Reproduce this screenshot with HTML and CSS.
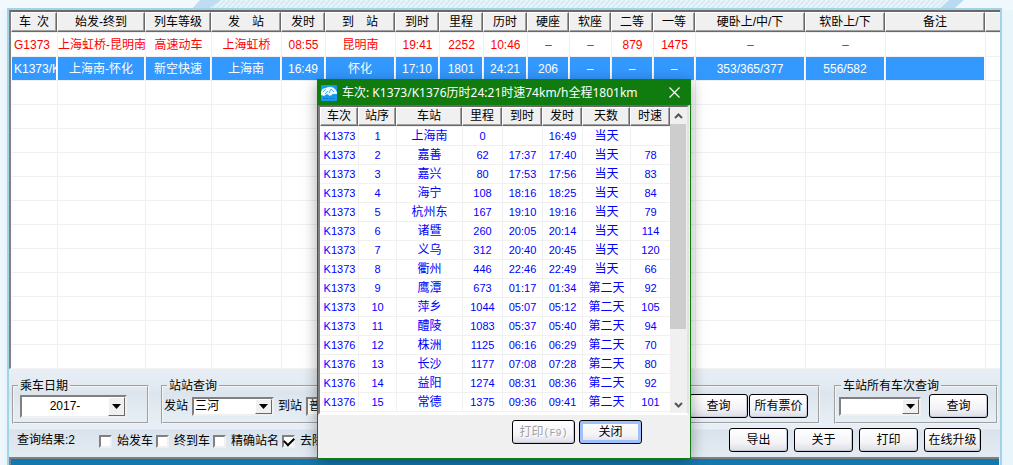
FILE: index.html
```html
<!DOCTYPE html>
<html lang="zh-CN">
<head>
<meta charset="utf-8">
<title>列车时刻查询</title>
<link rel="stylesheet" href="styles.css">
</head>
<body>
<svg class="backdrop" aria-hidden="true" width="100%" height="10">
  <defs><pattern id="hatch" width="5" height="5" patternUnits="userSpaceOnUse"><path d="M-1 6L6 -1" stroke="#d3e6ec" stroke-width="1.3"/></pattern></defs>
  <rect width="100%" height="10" fill="url(#hatch)"/>
  <path d="M0 0H206L191 10H0Z" fill="#f1f9fd"/>
  <path d="M200 0H221L207 10H191Z" fill="#bfdcf2"/>
  <path d="M949 0H964L953 10H938Z" fill="#b9daf1"/>
  <path d="M964 0H1600V10H953Z" fill="#eef8fd"/>
</svg>
<main class="panel">
  <div class="list">
    <table class="grid trains">
      <colgroup><col class="w46"><col class="w88"><col class="w66"><col class="w70"><col class="w44"><col class="w70"><col class="w44"><col class="w44"><col class="w44"><col class="w42"><col class="w42"><col class="w42"><col class="w42"><col class="w110"><col class="w80"><col class="w100"><col></colgroup>
      <thead><tr><th>车&ensp;次</th><th>始发-终到</th><th>列车等级</th><th>发&emsp;站</th><th>发时</th><th>到&emsp;站</th><th>到时</th><th>里程</th><th>历时</th><th>硬座</th><th>软座</th><th>二等</th><th>一等</th><th>硬卧上/中/下</th><th>软卧上/下</th><th>备注</th><th></th></tr></thead>
      <tbody>
        <tr class="fast"><td class="code">G1373</td><td>上海虹桥-昆明南</td><td>高速动车</td><td>上海虹桥</td><td>08:55</td><td>昆明南</td><td>19:41</td><td>2252</td><td>10:46</td><td>–</td><td>–</td><td>879</td><td>1475</td><td>–</td><td>–</td><td></td><td></td></tr>
        <tr class="selected"><td class="code">K1373/K1376</td><td>上海南-怀化</td><td>新空快速</td><td>上海南</td><td>16:49</td><td>怀化</td><td>17:10</td><td>1801</td><td>24:21</td><td>206</td><td>–</td><td>–</td><td>–</td><td>353/365/377</td><td>556/582</td><td></td><td></td></tr>
        <tr><td></td><td></td><td></td><td></td><td></td><td></td><td></td><td></td><td></td><td></td><td></td><td></td><td></td><td></td><td></td><td></td><td></td></tr>
        <tr><td></td><td></td><td></td><td></td><td></td><td></td><td></td><td></td><td></td><td></td><td></td><td></td><td></td><td></td><td></td><td></td><td></td></tr>
        <tr><td></td><td></td><td></td><td></td><td></td><td></td><td></td><td></td><td></td><td></td><td></td><td></td><td></td><td></td><td></td><td></td><td></td></tr>
        <tr><td></td><td></td><td></td><td></td><td></td><td></td><td></td><td></td><td></td><td></td><td></td><td></td><td></td><td></td><td></td><td></td><td></td></tr>
        <tr><td></td><td></td><td></td><td></td><td></td><td></td><td></td><td></td><td></td><td></td><td></td><td></td><td></td><td></td><td></td><td></td><td></td></tr>
        <tr><td></td><td></td><td></td><td></td><td></td><td></td><td></td><td></td><td></td><td></td><td></td><td></td><td></td><td></td><td></td><td></td><td></td></tr>
        <tr><td></td><td></td><td></td><td></td><td></td><td></td><td></td><td></td><td></td><td></td><td></td><td></td><td></td><td></td><td></td><td></td><td></td></tr>
        <tr><td></td><td></td><td></td><td></td><td></td><td></td><td></td><td></td><td></td><td></td><td></td><td></td><td></td><td></td><td></td><td></td><td></td></tr>
        <tr><td></td><td></td><td></td><td></td><td></td><td></td><td></td><td></td><td></td><td></td><td></td><td></td><td></td><td></td><td></td><td></td><td></td></tr>
        <tr><td></td><td></td><td></td><td></td><td></td><td></td><td></td><td></td><td></td><td></td><td></td><td></td><td></td><td></td><td></td><td></td><td></td></tr>
        <tr><td></td><td></td><td></td><td></td><td></td><td></td><td></td><td></td><td></td><td></td><td></td><td></td><td></td><td></td><td></td><td></td><td></td></tr>
        <tr><td></td><td></td><td></td><td></td><td></td><td></td><td></td><td></td><td></td><td></td><td></td><td></td><td></td><td></td><td></td><td></td><td></td></tr>
      </tbody>
    </table>
  </div>

  <form class="controls">
    <div class="groups">
      <fieldset class="group date">
        <legend>乘车日期</legend>
        <div class="combo wide"><select aria-label="乘车日期"><option>2017-</option></select><span class="drop"><svg width="9" height="5" viewBox="0 0 9 5"><path d="M0 0H9L4.500 5Z"/></svg></span></div>
      </fieldset>
      <fieldset class="group route">
        <legend>站站查询</legend>
        <label for="from">发站</label>
        <div class="combo"><select id="from"><option>三河</option></select><span class="drop"><svg width="9" height="5" viewBox="0 0 9 5"><path d="M0 0H9L4.500 5Z"/></svg></span></div>
        <label for="to">到站</label>
        <div class="combo"><select id="to"><option>普</option></select><span class="drop"><svg width="9" height="5" viewBox="0 0 9 5"><path d="M0 0H9L4.500 5Z"/></svg></span></div>
        <div class="pair"><button type="button">查询</button><button type="button">所有票价</button></div>
      </fieldset>
      <fieldset class="group station">
        <legend>车站所有车次查询</legend>
        <div class="combo"><select aria-label="车站"><option></option></select><span class="drop"><svg width="9" height="5" viewBox="0 0 9 5"><path d="M0 0H9L4.500 5Z"/></svg></span></div>
        <button type="button">查询</button>
      </fieldset>
    </div>
    <div class="options">
      <output>查询结果:2</output>
      <div class="checks">
        <label><input type="checkbox">始发车</label>
        <label><input type="checkbox">终到车</label>
        <label><input type="checkbox">精确站名</label>
        <label><input type="checkbox" checked>去除</label>
      </div>
      <div class="actions"><button type="button">导出</button><button type="button">关于</button><button type="button">打印</button><button type="button" class="tight">在线升级</button></div>
    </div>
  </form>
  <div class="lower"></div>
</main>

<section class="dialog" role="dialog" aria-labelledby="dlg-title">
  <header class="titlebar">
    <svg width="16" height="16" viewBox="0 0 16 16" aria-hidden="true"><rect width="16" height="16" rx="1" fill="#1599ee"/><path d="M0 7Q1 3 5 3Q10 0 14 4L16 7V9L12 9L9 11L6 9L3 11L0 10Z" fill="#eaf7ff"/><path d="M2 7L5 4M8 8L10 4L13 7M4 9L7 6" stroke="#4aaeea" fill="none"/><path d="M2 13.500H14" stroke="#087bc9" stroke-dasharray="2 1"/></svg>
    <h1 id="dlg-title">车次: K1373/K1376历时24:21时速74km/h全程1801km</h1>
    <button type="button" class="close" aria-label="关闭窗口"><svg width="11" height="11" viewBox="0 0 11 11"><path d="M.5 .5L10.500 10.500M10.500 .5L.5 10.500" stroke="#fff" stroke-width="1.200"/></svg></button>
  </header>
  <div class="stops-list">
    <table class="grid stops">
      <colgroup><col class="w38"><col class="w38"><col class="w66"><col class="w40"><col class="w40"><col class="w40"><col class="w48"><col class="w40"></colgroup>
      <thead><tr><th>车次</th><th>站序</th><th>车站</th><th>里程</th><th>到时</th><th>发时</th><th>天数</th><th>时速</th></tr></thead>
      <tbody>
        <tr><td>K1373</td><td>1</td><td class="cn">上海南</td><td>0</td><td></td><td>16:49</td><td class="cn">当天</td><td></td></tr>
        <tr><td>K1373</td><td>2</td><td class="cn">嘉善</td><td>62</td><td>17:37</td><td>17:40</td><td class="cn">当天</td><td>78</td></tr>
        <tr><td>K1373</td><td>3</td><td class="cn">嘉兴</td><td>80</td><td>17:53</td><td>17:56</td><td class="cn">当天</td><td>83</td></tr>
        <tr><td>K1373</td><td>4</td><td class="cn">海宁</td><td>108</td><td>18:16</td><td>18:25</td><td class="cn">当天</td><td>84</td></tr>
        <tr><td>K1373</td><td>5</td><td class="cn">杭州东</td><td>167</td><td>19:10</td><td>19:16</td><td class="cn">当天</td><td>79</td></tr>
        <tr><td>K1373</td><td>6</td><td class="cn">诸暨</td><td>260</td><td>20:05</td><td>20:14</td><td class="cn">当天</td><td>114</td></tr>
        <tr><td>K1373</td><td>7</td><td class="cn">义乌</td><td>312</td><td>20:40</td><td>20:45</td><td class="cn">当天</td><td>120</td></tr>
        <tr><td>K1373</td><td>8</td><td class="cn">衢州</td><td>446</td><td>22:46</td><td>22:49</td><td class="cn">当天</td><td>66</td></tr>
        <tr><td>K1373</td><td>9</td><td class="cn">鹰潭</td><td>673</td><td>01:17</td><td>01:34</td><td class="cn">第二天</td><td>92</td></tr>
        <tr><td>K1373</td><td>10</td><td class="cn">萍乡</td><td>1044</td><td>05:07</td><td>05:12</td><td class="cn">第二天</td><td>105</td></tr>
        <tr><td>K1373</td><td>11</td><td class="cn">醴陵</td><td>1083</td><td>05:37</td><td>05:40</td><td class="cn">第二天</td><td>94</td></tr>
        <tr><td>K1376</td><td>12</td><td class="cn">株洲</td><td>1125</td><td>06:16</td><td>06:29</td><td class="cn">第二天</td><td>70</td></tr>
        <tr><td>K1376</td><td>13</td><td class="cn">长沙</td><td>1177</td><td>07:08</td><td>07:28</td><td class="cn">第二天</td><td>80</td></tr>
        <tr><td>K1376</td><td>14</td><td class="cn">益阳</td><td>1274</td><td>08:31</td><td>08:36</td><td class="cn">第二天</td><td>92</td></tr>
        <tr><td>K1376</td><td>15</td><td class="cn">常德</td><td>1375</td><td>09:36</td><td>09:41</td><td class="cn">第二天</td><td>101</td></tr>
      </tbody>
    </table>
    <div class="scroll" aria-hidden="true">
      <span><svg width="9" height="6" viewBox="0 0 9 6"><path d="M1 5L4.500 1.500L8 5"/></svg></span>
      <i></i>
      <span class="down"><svg width="9" height="6" viewBox="0 0 9 6"><path d="M1 1L4.500 4.500L8 1"/></svg></span>
    </div>
  </div>
  <footer class="dialog-foot"><button type="button" disabled>打印<span class="mono">(F9)</span></button><button type="button" class="default">关闭</button></footer>
</section>
</body>
</html>
```
FILE: styles.css
```css
* { box-sizing: border-box; }

body {
  margin: 0;
  min-height: 100vh;
  display: flex;
  flex-direction: column;
  overflow: hidden;
  background: linear-gradient(90deg, #f0f9fd, #e4f3fa 9px, #e8f6fc);
  color: #000;
  font: 12px/16px "Liberation Sans", "Noto Sans CJK SC", sans-serif;
}

.backdrop { position: absolute; top: 0; left: 0; z-index: -1; }

.panel {
  flex: 1;
  display: flex;
  flex-direction: column;
  margin: 8px 11px 0 7px;
  border: solid #a3d3e8;
  border-width: 2px 2px 0;
  background: #e4ebf3;
}

/* Tables */
.list {
  border: solid #696969;
  border-width: 2px 0 0 2px;
  border-left-color: #808080;
  border-bottom: 1px solid #f4f4f4;
  background: #fff;
  overflow: hidden;
}

.grid { width: 100%; table-layout: fixed; border-collapse: separate; border-spacing: 0; }

.grid th {
  height: 20px;
  padding: 0;
  background: #f0f0f0;
  border: 1px solid #fff;
  border-right-color: #696969;
  border-bottom-color: #696969;
  box-shadow: inset -1px -1px #a0a0a0;
  font-weight: normal;
  line-height: 18px;
  white-space: nowrap;
  overflow: hidden;
}

.trains th:last-child { border-right: 0; box-shadow: inset 0 -1px #a0a0a0; }

.grid td {
  height: 24px;
  padding: 0;
  border-top: 1px solid #f0f0f0;
  border-left: 1px solid #f0f0f0;
  text-align: center;
  line-height: 20px;
  white-space: nowrap;
  overflow: hidden;
  background-clip: padding-box;
}

.grid td:first-child { border-left-color: #fff; }
.trains .code { text-align: left; padding-left: 2px; }
.fast { color: #f00; }
.selected { color: #fff; }
.selected td { background-color: #3399ff; border-right: 1px solid #fff; }
.selected td:last-child { background-color: #fff; }

.w38 { width: 38px; }
.w40 { width: 40px; }
.w42 { width: 42px; }
.w44 { width: 44px; }
.w46 { width: 46px; }
.w48 { width: 48px; }
.w66 { width: 66px; }
.w70 { width: 70px; }
.w80 { width: 80px; }
.w88 { width: 88px; }
.w100 { width: 100px; }
.w110 { width: 110px; }

/* Controls */
button {
  width: 59px;
  height: 24px;
  padding: 0;
  border: 1px solid #000;
  border-radius: 3px;
  background: linear-gradient(#fff, #f4f4f8 60%, #dcdce6);
  box-shadow: inset -1px -1px #c8c8d4;
  color: #000;
  font: inherit;
  white-space: nowrap;
}

.controls {
  padding: 9px 2px 5px 3px;
  background: linear-gradient(#e8eef5, #e2eaf1 18px, #dce5ed 24px, #e5edf4 48px, #e7eef8 60px, #dae3ec 61px, #e3ebf2);
}

.groups { display: flex; }

.group {
  display: flex;
  align-items: center;
  height: 46px;
  min-width: 0;
  margin: 0;
  padding: 0 0 4px;
  border: 2px groove #f4f4f4;
}

.group legend { margin-left: 3px; padding: 0 2px; line-height: 16px; }
.group.date { width: 137px; padding-left: 6px; margin-right: 12px; }
.date legend { margin-left: -2px; }
.group.route { flex: 1; padding-left: 1px; gap: 4px; }
.group.station { width: 164px; margin-left: 14px; padding-left: 3px; gap: 8px; }
.group.station legend { margin-left: 2px; }
.pair { display: flex; gap: 1px; margin-left: auto; padding-right: 10px; }

.combo {
  position: relative;
  width: 82px;
  height: 19px;
  border: 2px solid;
  border-color: #808080 #f0f0f0 #f0f0f0 #808080;
  background: #fff;
}

.combo.wide { width: 107px; height: 23px; }

.combo select {
  display: block;
  width: 100%;
  height: 100%;
  padding: 0 18px 0 1px;
  border: 0;
  appearance: none;
  background: transparent;
  color: #000;
  font: inherit;
  line-height: 15px;
}

.combo.wide select { text-align: center; text-align-last: center; }

.drop {
  position: absolute;
  top: 0;
  right: 0;
  bottom: 0;
  display: grid;
  place-items: center;
  width: 17px;
  border: 1px solid;
  border-color: #fff #696969 #696969 #fff;
  background: #f0f0f0;
  pointer-events: none;
}

.options { display: flex; align-items: center; margin-top: 4px; padding: 0 17px 0 5px; }
.options output { width: 82px; }
.checks { display: flex; padding-top: 2px; }
.checks label { display: flex; align-items: center; gap: 5px; margin-right: 3px; }

.checks input {
  appearance: none;
  display: grid;
  place-items: center;
  width: 13px;
  height: 13px;
  margin: 0;
  border: 2px solid;
  border-color: #808080 #f0f0f0 #f0f0f0 #808080;
  background: #fff;
}

.checks input:checked::before {
  content: "";
  width: 8px;
  height: 5px;
  margin-bottom: 3px;
  border: solid #000;
  border-width: 0 0 2px 2px;
  transform: rotate(-45deg);
}

.actions { display: flex; gap: 6px; margin-left: auto; }
.actions .tight { width: 57px; }

.lower {
  flex: 1;
  margin-right: 1px;
  border: 2px solid #808080;
  border-width: 2px 0 0 2px;
  background: #1478b0;
}

/* Stop list window */
.dialog {
  position: absolute;
  left: 317px;
  top: 79px;
  width: 374px;
  border: 1px solid #107c10;
  background: #f0f0f0;
  box-shadow: 0 3px 14px rgba(0, 0, 0, .35);
}

.titlebar { display: flex; align-items: center; height: 25px; padding: 0 10px 0 3px; background: #107c10; color: #fff; }
.titlebar h1 { flex: 1; margin: 0 0 0 5px; font: 12px/20px "Noto Sans", "Noto Sans CJK SC", sans-serif; white-space: nowrap; }

.close { display: grid; place-items: center; width: 11px; background: none; border: 0; box-shadow: none; }

.stops-list {
  display: flex;
  height: 310px;
  margin-right: 1px;
  border: 2px solid;
  border-color: #696969 #e3e3e3 #fff #808080;
  background: #fff;
}

.stops { width: 350px; height: 304px; flex: none; color: #00f; font-size: 11px; }
.stops th { height: 19px; color: #000; font-size: 12px; line-height: 17px; }
.stops td { height: 19px; line-height: 18px; }
.stops .cn { font-size: 12px; }
.stops tbody tr:last-child td { border-bottom: 1px solid #f0f0f0; }

.scroll { flex: 1; display: grid; grid-template-rows: 17px 205px 1fr; background: #f0f0f0; }
.scroll span { display: grid; place-items: center; }
.scroll i { margin: 0 1px 0 0; background: #cdcdcd; }
.scroll .down { align-self: end; height: 17px; }
.scroll path { fill: none; stroke: #555; stroke-width: 2; }

.dialog-foot { display: flex; justify-content: flex-end; gap: 4px; padding: 5px 48px 14px 0; }
.dialog-foot button { width: 63px; }
.dialog-foot button:disabled { color: #a0a0a0; text-shadow: 1px 1px #fff; }
.dialog-foot .default { box-shadow: inset 0 0 0 3px #a0c0fa; }
.mono { font: 10px "Liberation Mono", monospace; }
```
